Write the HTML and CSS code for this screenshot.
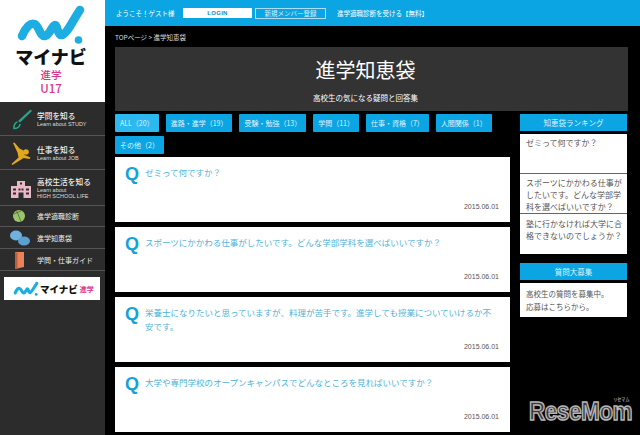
FILE: index.html
```html
<!DOCTYPE html>
<html lang="ja">
<head>
<meta charset="utf-8">
<title>進学知恵袋</title>
<link rel="stylesheet" href="styles.css">
</head>
<body>
<div class="page">
  <aside class="sidebar">
    <div class="logo">
      <svg class="logo-mark" viewBox="0 0 105 47" width="105" height="47">
        <path d="M22 36 C26 27 30 23 34 24 C39 25 40 37 45 36 C50 35 52 25 55 25 C58 25 57 36 62 35 C67 34 73 20 80 10" fill="none" stroke="#1dade2" stroke-width="8.500" stroke-linecap="round" stroke-linejoin="round"/>
        <circle cx="78.500" cy="40" r="3.800" fill="#1dade2"/>
      </svg>
      <div class="logo-name">マイナビ</div>
      <div class="logo-sub">進学</div>
      <div class="logo-sub logo-u">U17</div>
    </div>
    <nav>
      <a class="nav-big nav-h34">
        <svg class="nav-ico" viewBox="0 0 24 24" width="24" height="24"><path d="M21.500 2.500 23 4 11 15.500 9 14z" fill="#1fa88f"/><path d="M8.500 15c-2.500.5-4 3.500-3.500 6.500 3 0 6-1.500 6-4.500" fill="none" stroke="#1fa88f" stroke-width="1.600"/></svg>
        <span class="nav-text"><b>学問を知る</b><small>Learn about STUDY</small></span>
      </a>
      <a class="nav-big nav-h34">
        <svg class="nav-ico" viewBox="0 0 24 24" width="24" height="24"><circle cx="17" cy="11" r="2.800" fill="#e0a81c"/><path d="M4 2l1.500-.5 5 6 4 2 1 4.500 6 2.500-1 1.500-6-1-3 2-8 5-1-1 7-6.500-1-5z" fill="#e0a81c"/></svg>
        <span class="nav-text"><b>仕事を知る</b><small>Learn about JOB</small></span>
      </a>
      <a class="nav-big nav-h36">
        <svg class="nav-ico" viewBox="0 0 24 24" width="24" height="24"><path d="M2 10h6V5h8v5h6v12H2z" fill="#eab7c6"/><path d="M4 12.500h3v2H4zm0 4h3v2H4zm13-4h3v2h-3zm0 4h3v2h-3zm-7.500-4h2v2h-2zm3 0h2v2h-2zm-3 4h5v5.500h-5zM11 6.500h2v2h-2z" fill="#2c2c2c"/></svg>
        <span class="nav-text"><b>高校生活を知る</b><small>Learn about<br>HIGH SCHOOL LIFE</small></span>
      </a>
      <a class="nav-small nav-first">
        <svg class="nav-ico" viewBox="0 0 24 16" width="24" height="16"><circle cx="12" cy="8" r="6" fill="#9cc56b"/><path d="M9.500 2.500l4.500 11M7 6l7-3" stroke="#4c6a35" stroke-width=".8" fill="none"/></svg>
        <span>進学適職診断</span>
      </a>
      <a class="nav-small">
        <svg class="nav-ico" viewBox="0 0 24 18" width="24" height="18"><ellipse cx="9" cy="6.500" rx="6" ry="5" fill="#6fb2e0"/><ellipse cx="17" cy="12" rx="6" ry="4.500" fill="#5aa0d2"/></svg>
        <span>進学知恵袋</span>
      </a>
      <a class="nav-small">
        <svg class="nav-ico" viewBox="0 0 24 18" width="24" height="18"><path d="M8 1h9v15l-9 2z" fill="#e8825a"/><path d="M8 1l2.500 1v16H8z" fill="#b85f3e"/></svg>
        <span>学問・仕事ガイド</span>
      </a>
    </nav>
    <div class="banner">
      <svg viewBox="16 4 70 40" width="26" height="15"><path d="M22 36 C26 27 30 23 34 24 C39 25 40 37 45 36 C50 35 52 25 55 25 C58 25 57 36 62 35 C67 34 73 20 80 10" fill="none" stroke="#1dade2" stroke-width="8.500" stroke-linecap="round"/><circle cx="78.500" cy="40" r="3.800" fill="#1dade2"/></svg>
      <span class="banner-name">マイナビ</span><span class="banner-sub">進学</span>
    </div>
  </aside>

  <div class="main">
    <header class="topbar">
      <span class="welcome">ようこそ！ゲスト様</span>
      <span class="btn-login">LOGIN</span>
      <span class="btn-reg">新規メンバー登録</span>
      <span class="top-link">進学適職診断を受ける【無料】</span>
    </header>
    <div class="crumb">TOPページ &gt; 進学知恵袋</div>
    <section class="hero">
      <h1>進学知恵袋</h1>
      <p>高校生の気になる疑問と回答集</p>
    </section>
    <div class="columns">
      <div class="content">
        <div class="tags">
          <span class="tag tag-on">ALL（20）</span>
          <span class="tag">進路・進学（19）</span>
          <span class="tag">受験・勉強（13）</span>
          <span class="tag">学問（11）</span>
          <span class="tag">仕事・資格（7）</span>
          <span class="tag">人間関係（1）</span>
          <span class="tag">その他（2）</span>
        </div>
        <article class="card">
          <div class="q"><span class="q-mark">Q</span><span class="q-text">ゼミって何ですか？</span></div>
          <time>2015.06.01</time>
        </article>
        <article class="card">
          <div class="q"><span class="q-mark">Q</span><span class="q-text">スポーツにかかわる仕事がしたいです。どんな学部学科を選べばいいですか？</span></div>
          <time>2015.06.01</time>
        </article>
        <article class="card">
          <div class="q"><span class="q-mark">Q</span><span class="q-text">栄養士になりたいと思っていますが、料理が苦手です。進学しても授業についていけるか不<br>安です。</span></div>
          <time>2015.06.01</time>
        </article>
        <article class="card">
          <div class="q"><span class="q-mark">Q</span><span class="q-text">大学や専門学校のオープンキャンパスでどんなところを見ればいいですか？</span></div>
          <time>2015.06.01</time>
        </article>
      </div>
      <aside class="side">
        <h2 class="side-head">知恵袋ランキング</h2>
        <ul class="rank">
          <li>ゼミって何ですか？</li>
          <li>スポーツにかかわる仕事がしたいです。どんな学部学科を選べばいいですか？</li>
          <li>塾に行かなければ大学に合格できないのでしょうか？</li>
        </ul>
        <h2 class="side-head side-head2">質問大募集</h2>
        <p class="side-box">高校生の質問を募集中。<br>応募はこちらから。</p>
      </aside>
    </div>
  </div>
</div>
<div class="watermark">ReseMom<span>リセマム</span></div>
</body>
</html>
```
FILE: styles.css
```css
* { box-sizing: border-box; }
html, body { margin: 0; height: 435px; overflow: hidden; background: #000; }
body { font-family: "Noto Sans CJK JP", "Liberation Sans", sans-serif; color: #fff; }
.page { display: flex; height: 435px; }

.sidebar { width: 105px; flex: none; background: #2c2c2c; }
.logo { height: 102px; background: #fff; display: flex; flex-direction: column; align-items: center; }
.logo-mark { display: block; flex: none; }
.logo-name { margin-right: 3px; font-size: 18px; line-height: 18px; font-weight: 900; color: #111; }
.logo-sub { margin-right: 3px; margin-top: 4px; font-size: 10.500px; line-height: 12px; font-weight: 500; color: #d9348a; }
.logo-u { margin-top: 1px; font-size: 11.500px; }

nav a { display: flex; align-items: center; border-bottom: 1px solid #555; color: #eee; }
.nav-h34 { height: 34px; }
.nav-h36 { height: 36px; }
.nav-big { padding-left: 9px; gap: 1px; }
.nav-ico { flex: none; }
.nav-text { display: flex; flex-direction: column; padding-left: 3px; }
.nav-text b { font-size: 7.700px; line-height: 11px; font-weight: 500; }
.nav-text small { font-family: "Liberation Sans", sans-serif; font-size: 5.500px; line-height: 6.500px; color: #ddd; }
.nav-small { height: 22px; font-size: 7px; padding-left: 7px; gap: 6px; }
.nav-first { height: 21px; }
.banner { margin: 6px 5px 0 4px; height: 23px; background: #fff; display: flex; align-items: center; padding-left: 9px; gap: 1px; }
.banner-name { font-size: 9.500px; font-weight: 900; color: #111; white-space: nowrap; }
.banner-sub { font-size: 7px; color: #d9348a; font-weight: 700; margin-left: 1px; white-space: nowrap; }

.main { flex: 1; min-width: 0; }
.topbar { height: 26px; background: #0ca5e4; display: flex; align-items: center; padding-left: 11px; font-size: 6.500px; }
.welcome { width: 67px; }
.btn-login { width: 69px; height: 10px; background: #fff; color: #0b8fc4; font-size: 6px; font-weight: 700; text-align: center; line-height: 10px; font-family: "Liberation Sans", sans-serif; letter-spacing: .3px; }
.btn-reg { width: 71px; height: 11px; margin-left: 3px; border: 1px solid #a9def5; text-align: center; line-height: 9px; font-size: 6.500px; color: #d5effb; }
.top-link { margin-left: 11px; }
.crumb { height: 21px; padding: 7px 0 0 10px; font-size: 6.500px; line-height: 8px; color: #ddd; }
.hero { margin-left: 10px; width: 513px; height: 64px; background: #333; text-align: center; padding: 10px 12px 0 0; }
.hero h1 { margin: 0; font-size: 20px; line-height: 26px; font-weight: 400; }
.hero p { margin: 9px 0 0; font-size: 7.500px; line-height: 11px; }

.columns { display: flex; padding-left: 10px; margin-top: 3px; gap: 10px; }
.content { width: 395px; }
.tags { display: flex; flex-wrap: wrap; gap: 4px 7px; margin-bottom: 3px; }
.tag { height: 18px; padding: 0 5px; background: #0ca5e4; border-radius: 1px; font-size: 7px; line-height: 18px; white-space: nowrap; color: #dff3fc; }
.tag-on { background: #2db8ef; }
.card { height: 65px; margin-bottom: 5px; background: #fff; padding: 7px 10px 0; position: relative; }
.q { display: flex; align-items: flex-start; }
.q-mark { width: 20px; flex: none; font-family: "Liberation Sans", sans-serif; font-size: 18px; line-height: 20px; font-weight: 700; color: #14a3d8; }
.q-text { padding-top: 1px; font-size: 8.500px; line-height: 14px; color: #4fb2d8; }
.card time { position: absolute; right: 11px; bottom: 11px; font-family: "Liberation Sans", sans-serif; font-size: 7px; line-height: 9px; color: #555; }

.side { width: 107px; }
.side-head { margin: 0; height: 17px; background: #0ca5e4; font-size: 7.500px; line-height: 17px; font-weight: 400; text-align: center; color: #dff3fc; }
.side-head2 { margin-top: 9px; }
.rank { list-style: none; margin: 3px 0 0; padding: 0; background: #fff; }
.rank li { height: 40px; padding: 3px 5px 0 6px; border-bottom: 1px solid #666; font-size: 8px; line-height: 12px; color: #555; }
.rank li:last-child { border-bottom: 0; padding-top: 4px; }
.side-box { margin: 3px 0 0; height: 34px; background: #fff; padding: 4px 6px; font-size: 7.500px; line-height: 13px; color: #555; }

.watermark { position: absolute; left: 529px; top: 396px; font-family: "Liberation Sans", sans-serif; font-size: 25px; line-height: 30px; font-weight: 700; color: #3a3a3a; letter-spacing: -.5px; -webkit-text-stroke: 1.500px #b5b5b5; white-space: nowrap; transform: scaleX(.9); transform-origin: left top; }
.watermark span { position: absolute; right: 3px; top: 0; font-family: "Noto Sans CJK JP", sans-serif; font-size: 4.500px; line-height: 6px; letter-spacing: 0; -webkit-text-stroke: 0; color: #999; }
```
